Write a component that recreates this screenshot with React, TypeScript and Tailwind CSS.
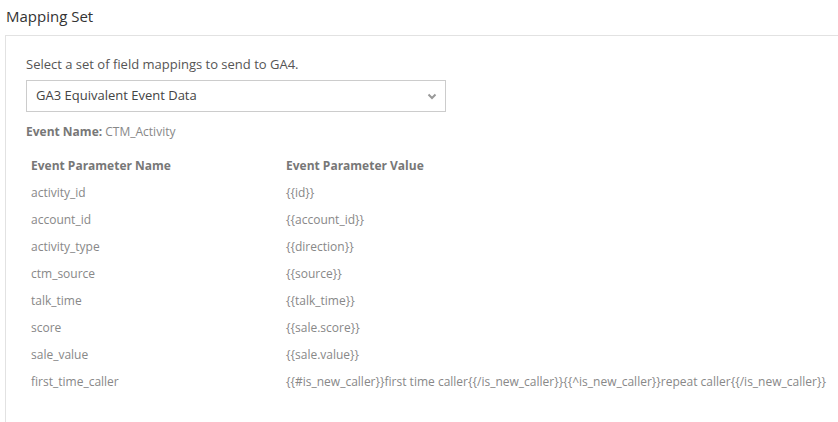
const rows = [
  ["activity_id", "{{id}}"],
  ["account_id", "{{account_id}}"],
  ["activity_type", "{{direction}}"],
  ["ctm_source", "{{source}}"],
  ["talk_time", "{{talk_time}}"],
  ["score", "{{sale.score}}"],
  ["sale_value", "{{sale.value}}"],
  [
    "first_time_caller",
    "{{#is_new_caller}}first time caller{{/is_new_caller}}{{^is_new_caller}}repeat caller{{/is_new_caller}}",
  ],
];

function Chevron() {
  return (
    <svg width="10" height="7" viewBox="0 0 10 7" className="text-[#999]">
      <path d="M1.5 1.5 L5 5 L8.5 1.5" fill="none" stroke="currentColor" strokeWidth="2" />
    </svg>
  );
}

export default function App() {
  return (
    <div
      className="w-[838px] h-[422px] bg-white overflow-hidden text-[#555]"
      style={{ fontFamily: '"Open Sans", sans-serif' }}
    >
      <div className="h-[35px] pl-[6px] pt-[6px] text-[15px] leading-[20px] text-[#333]">
        Mapping Set
      </div>
      <div className="ml-[5px] border-l border-t border-[#e2e2e2] h-[400px] pl-[20px] pt-[19px]">
        <p className="text-[13px] leading-[18px] text-[#555] mb-[7px]">
          Select a set of field mappings to send to GA4.
        </p>
        <div className="w-[420px] h-[32px] border border-[#cccccc] flex items-center justify-between pl-[9px] pr-[8px] text-[13px] text-[#444]">
          <span>GA3 Equivalent Event Data</span>
          <Chevron />
        </div>
        <p className="mt-[12px] text-[12px] leading-[16px] text-[#888]">
          <span className="font-bold text-[#777]">Event Name:</span> CTM_Activity
        </p>
        <table className="mt-[18px] text-[12px] leading-[16px] border-collapse">
          <thead>
            <tr>
              <th className="w-[255px] text-left font-bold text-[#777] px-[5px] pb-[5px]">
                Event Parameter Name
              </th>
              <th className="text-left font-bold text-[#777] px-[5px] pb-[5px]">
                Event Parameter Value
              </th>
            </tr>
          </thead>
          <tbody>
            {rows.map(([name, value]) => (
              <tr key={name}>
                <td className="px-[5px] py-[5.5px] text-[#888]">{name}</td>
                <td className="px-[5px] py-[5.5px] text-[#888] whitespace-nowrap">{value}</td>
              </tr>
            ))}
          </tbody>
        </table>
      </div>
    </div>
  );
}
